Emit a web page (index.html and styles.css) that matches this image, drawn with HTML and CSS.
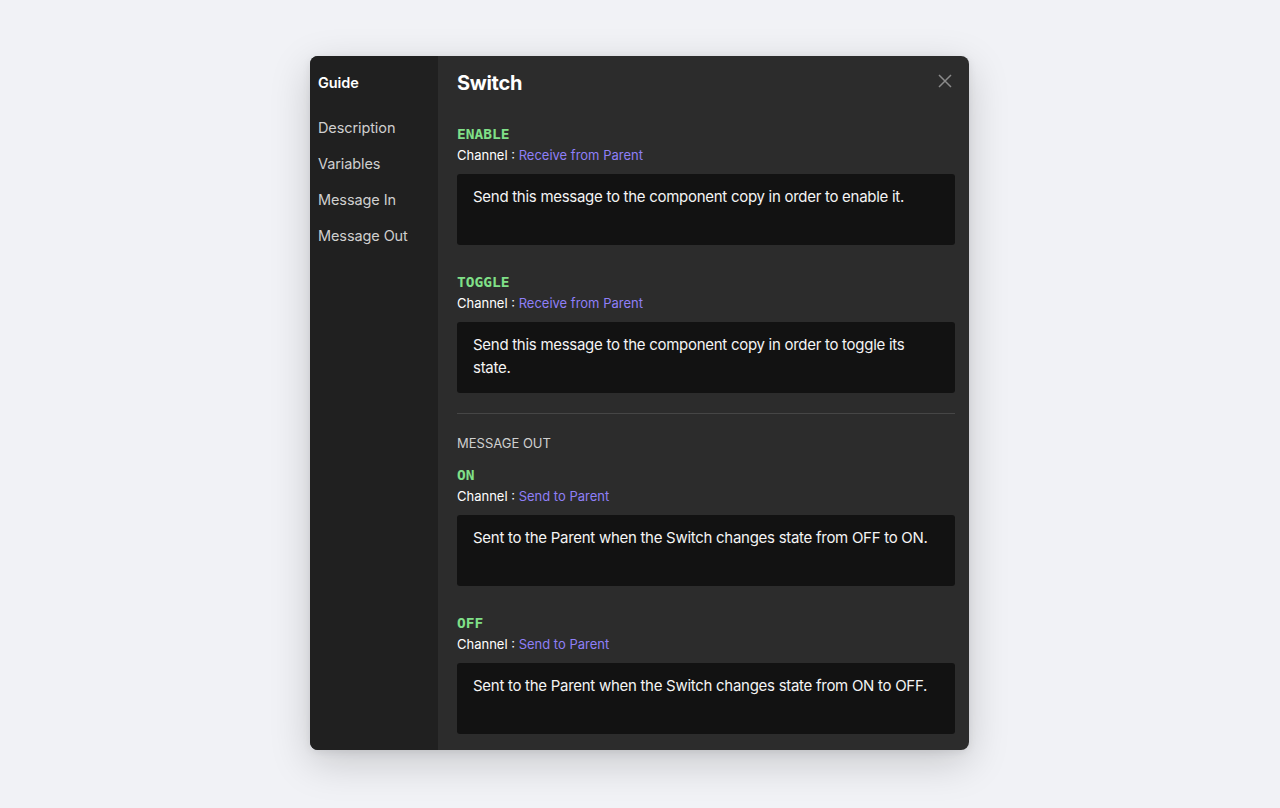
FILE: index.html
```html
<!DOCTYPE html>
<html>
<head>
<meta charset="utf-8">
<link rel="stylesheet" href="styles.css">
</head>
<body>
<div class="stage">
  <div class="modal">
    <aside class="sidebar">
      <div class="nav-title">Guide</div>
      <nav class="nav">
        <div class="nav-item">Description</div>
        <div class="nav-item">Variables</div>
        <div class="nav-item">Message In</div>
        <div class="nav-item">Message Out</div>
      </nav>
    </aside>
    <main class="pane">
      <header class="pane-head">
        <h1 class="title">Switch</h1>
        <button class="close" aria-label="Close">
          <svg width="14" height="14" viewBox="0 0 14 14"><path d="M1 1L13 13M13 1L1 13" stroke="#8a8a8a" stroke-width="1.5" fill="none"/></svg>
        </button>
      </header>
      <section class="msg">
        <div class="msg-name">ENABLE</div>
        <div class="channel">Channel : <span class="link">Receive from Parent</span></div>
        <div class="desc">Send this message to the component copy in order to enable it.</div>
      </section>
      <section class="msg">
        <div class="msg-name">TOGGLE</div>
        <div class="channel">Channel : <span class="link">Receive from Parent</span></div>
        <div class="desc">Send this message to the component copy in order to toggle its state.</div>
      </section>
      <hr class="divider">
      <div class="section-label">MESSAGE OUT</div>
      <section class="msg">
        <div class="msg-name">ON</div>
        <div class="channel">Channel : <span class="link">Send to Parent</span></div>
        <div class="desc">Sent to the Parent when the Switch changes state from OFF to ON.</div>
      </section>
      <section class="msg">
        <div class="msg-name">OFF</div>
        <div class="channel">Channel : <span class="link">Send to Parent</span></div>
        <div class="desc">Sent to the Parent when the Switch changes state from ON to OFF.</div>
      </section>
    </main>
  </div>
</div>
</body>
</html>
```
FILE: styles.css
```css
* { box-sizing: border-box; }
html, body { margin: 0; padding: 0; }
body {
  background: #f1f2f6;
  font-family: Inter, "Noto Sans", sans-serif;
  width: 1280px;
  height: 808px;
  overflow: hidden;
}
.stage {
  display: flex;
  justify-content: center;
  padding-top: 56px;
}
.modal {
  width: 659px;
  height: 694px;
  display: flex;
  border-radius: 8px;
  overflow: hidden;
  background: #2c2c2c;
  box-shadow: 0 12px 40px rgba(0,0,0,0.18), 0 2px 8px rgba(0,0,0,0.08);
  margin-left: -1px;
}
.sidebar {
  width: 128px;
  flex: none;
  background: #202020;
  padding: 17px 8px 0 8px;
}
.nav-title {
  color: #ffffff;
  font-size: 14.5px;
  font-weight: 600;
  line-height: 20px;
  letter-spacing: -0.1px;
}
.nav { margin-top: 25px; display: flex; flex-direction: column; gap: 16px; }
.nav-item {
  color: #cfcfcf;
  font-size: 14.5px;
  line-height: 20px;
  letter-spacing: -0.1px;
}
.pane {
  flex: 1;
  padding: 0 14px 0 19px;
  overflow: hidden;
}
.pane-head {
  display: flex;
  justify-content: space-between;
  align-items: center;
  padding-top: 13px;
  height: 41px;
  margin-bottom: 27px;
}
.title {
  margin: 0;
  color: #ffffff;
  font-size: 20px;
  font-weight: 700;
  line-height: 28px;
  letter-spacing: -0.3px;
}
.close {
  background: none;
  border: 0;
  padding: 0;
  margin-right: 3px;
  margin-top: -4px;
  display: flex;
  cursor: pointer;
}
.msg { margin-bottom: 27px; }
.msg-name {
  color: #80e088;
  font-family: "DejaVu Sans Mono", "Liberation Mono", monospace;
  font-weight: 700;
  font-size: 14.5px;
  line-height: 21px;
}
.channel {
  color: #ffffff;
  font-size: 13px;
  line-height: 20px;
  margin-bottom: 9px;
}
.link { color: #8f7ff7; }
.desc {
  background: #121212;
  border-radius: 3px;
  min-height: 71px;
  padding: 11px 16px 12px 16px;
  color: #f4f4f4;
  font-size: 15px;
  line-height: 23px;
  letter-spacing: -0.28px;
}
.divider {
  border: 0;
  border-top: 1px solid #464646;
  margin: -7px 0 19px 0;
}
.section-label {
  color: #cfcfcf;
  font-size: 13px;
  line-height: 20px;
  margin-bottom: 12px;
}
```
